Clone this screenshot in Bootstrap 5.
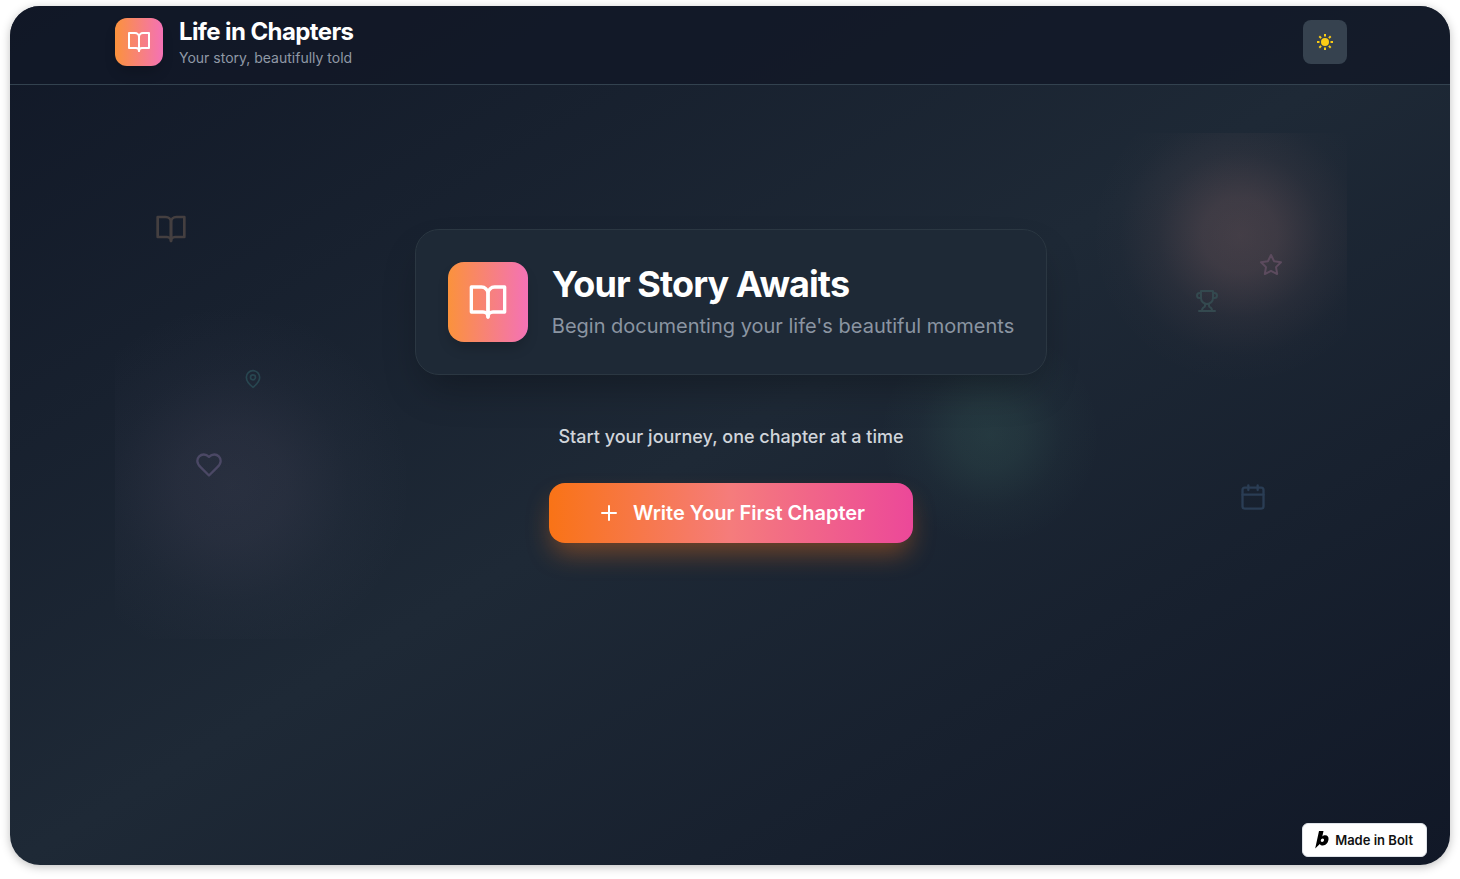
<!DOCTYPE html>
<html lang="en" data-bs-theme="dark">
<head>
<meta charset="utf-8">
<meta name="viewport" content="width=device-width, initial-scale=1">
<title>Life in Chapters</title>
<link href="https://cdn.jsdelivr.net/npm/bootstrap@5.3.0/dist/css/bootstrap.min.css" rel="stylesheet">
<style>
  body { font-family: Inter, "Liberation Sans", sans-serif; background: #fff; color: #fff; }
  .app-window {
    margin: 6px 10px 14px; min-height: calc(100vh - 20px); border-radius: 30px;
    background: linear-gradient(to bottom right, #111827, #1e2936 50%, #111827);
    box-shadow: 0 2px 10px rgba(0, 0, 0, .25);
  }
  .app-header { background: rgba(17, 24, 39, .8); border-bottom: 1px solid #33424f; padding: 10px 0 16px; }
  .page-width { width: 100%; max-width: 1280px; margin: 0 auto; padding: 0 23px 0 25px; }
  .icon { display: block; fill: none; stroke: currentColor; stroke-width: 2; stroke-linecap: round; stroke-linejoin: round; flex: none; }
  .logo-tile { background: linear-gradient(to right, #fb923c, #f472b6); box-shadow: 0 8px 14px -3px rgba(0, 0, 0, .2); color: #fff; flex: none; }
  .logo-sm { width: 48px; height: 48px; border-radius: 12px; }
  .logo-lg { width: 80px; height: 80px; border-radius: 16px; }
  .brand-name { font-size: 24px; line-height: 32px; font-weight: 700; letter-spacing: -.025em; }
  .brand-tag { font-size: 14px; line-height: 20px; color: #9099a6; }
  .theme-toggle { width: 44px; height: 44px; border-radius: 8px; background: #36424f; color: #facc15; }
  .theme-toggle:hover { background: #4b5563; color: #facc15; }
  .hero { margin-top: 48px; padding: 96px 0; }
  .glow { position: absolute; border-radius: 50%; }
  .glow-warm { width: 300px; height: 300px; right: -43px; top: -48px; background: radial-gradient(closest-side, rgba(235, 160, 150, .19), rgba(235, 160, 150, .16) 25%, rgba(235, 160, 150, .06) 55%, rgba(235, 160, 150, .01) 80%, transparent); }
  .glow-violet { width: 360px; height: 360px; left: -63px; bottom: -26px; background: radial-gradient(closest-side, rgba(160, 140, 175, .11), rgba(160, 140, 175, .09) 30%, rgba(150, 140, 175, .03) 65%, transparent); }
  .glow-teal { width: 220px; height: 220px; left: 765px; top: 192px; background: radial-gradient(closest-side, rgba(100, 185, 150, .13), rgba(100, 185, 150, .1) 30%, rgba(100, 185, 150, .03) 65%, transparent); }
  .float-icon { position: absolute; }
  .at-book { left: 40px; top: 80px; color: #443f40; }
  .at-pin { left: 128px; top: 236px; color: #284650; }
  .at-heart { left: 80px; bottom: 160px; color: #4b4865; }
  .at-star { right: 64px; top: 120px; color: #5c4b5e; }
  .at-trophy { right: 128px; top: 156px; color: #34494f; }
  .at-calendar { right: 80px; bottom: 128px; color: #2a3d54; }
  .story-card { padding: 32px; gap: 24px; border: 1px solid #2b3742; border-radius: 24px; background: #1e2936; box-shadow: 0 20px 40px -10px rgba(0, 0, 0, .3); }
  .story-title { font-size: 36px; line-height: 40px; font-weight: 700; letter-spacing: -.025em; margin-bottom: 8px; }
  .story-sub { font-size: 20px; line-height: 28px; color: #8b95a2; }
  .prompt { font-size: 18px; line-height: 28px; font-weight: 500; color: #d1d5db; margin: 48px 0 32px; }
  .write-btn, .write-btn:hover {
    height: 60px; padding: 0 48px; gap: 12px; border: 0; border-radius: 16px; color: #fff;
    font-size: 20px; line-height: 28px; font-weight: 600;
    background: linear-gradient(to right, #f97316, #f57c7c 50%, #ec4899);
    box-shadow: 0 14px 26px -4px rgba(249, 115, 22, .4);
  }
  .bolt-badge { position: absolute; right: 23px; bottom: 8px; height: 34px; padding: 0 13px 0 12px; gap: 6px; border: 1px solid #dfe3e8; border-radius: 6px; background: #fff; color: #111; font-size: 13px; line-height: 20px; font-weight: 600; }
</style>
</head>
<body>
<svg class="d-none" aria-hidden="true">
  <symbol id="book" viewBox="0 0 24 24"><path d="M2 3h6a4 4 0 0 1 4 4v14a3 3 0 0 0-3-3H2z"/><path d="M22 3h-6a4 4 0 0 0-4 4v14a3 3 0 0 1 3-3h7z"/></symbol>
</svg>
<div class="app-window position-relative overflow-hidden">
  <header class="app-header">
    <div class="page-width d-flex align-items-center justify-content-between">
      <div class="d-flex align-items-center gap-3">
        <div class="logo-tile logo-sm d-flex align-items-center justify-content-center"><svg class="icon" width="24" height="24"><use href="#book"/></svg></div>
        <div>
          <h1 class="brand-name m-0">Life in Chapters</h1>
          <p class="brand-tag m-0">Your story, beautifully told</p>
        </div>
      </div>
      <button type="button" class="theme-toggle btn border-0 p-0 d-flex align-items-center justify-content-center" aria-label="Switch to light theme">
        <svg class="icon" width="20" height="20" viewBox="0 0 20 20"><circle cx="10" cy="10" r="4" fill="currentColor" stroke="none"/><path stroke-linecap="butt" d="M10 2v2.500M10 15.500V18M2 10h2.500M15.500 10H18M4.300 4.300l1.800 1.800M13.900 13.900l1.800 1.800M4.300 15.700l1.800-1.800M13.900 6.100l1.800-1.800"/></svg>
      </button>
    </div>
  </header>
  <main class="page-width">
    <section class="hero position-relative overflow-hidden">
      <div class="glow glow-warm"></div>
      <div class="glow glow-violet"></div>
      <div class="glow glow-teal"></div>
      <svg class="icon float-icon at-book" width="32" height="32"><use href="#book"/></svg>
      <svg class="icon float-icon at-pin" width="20" height="20" viewBox="0 0 24 24"><path d="M20 10c0 6-8 12-8 12s-8-6-8-12a8 8 0 0 1 16 0Z"/><circle cx="12" cy="10" r="3"/></svg>
      <svg class="icon float-icon at-heart" width="28" height="28" viewBox="0 0 24 24"><path d="M19 14c1.49-1.46 3-3.21 3-5.5A5.5 5.5 0 0 0 16.500 3c-1.760 0-3 .5-4.500 2-1.500-1.500-2.740-2-4.500-2A5.500 5.500 0 0 0 2 8.500c0 2.300 1.500 4.050 3 5.500l7 7Z"/></svg>
      <svg class="icon float-icon at-star" width="24" height="24" viewBox="0 0 24 24"><path d="M12 2l3.090 6.260L22 9.270l-5 4.870 1.180 6.880L12 17.770l-6.180 3.250L7 14.140 2 9.270l6.910-1.010z"/></svg>
      <svg class="icon float-icon at-trophy" width="24" height="24" viewBox="0 0 24 24"><path d="M6 9H4.500a2.500 2.500 0 0 1 0-5H6M18 9h1.500a2.500 2.500 0 0 0 0-5H18M4 22h16M10 14.660V17c0 .55-.47.98-.97 1.210C7.850 18.750 7 20.240 7 22M14 14.660V17c0 .55.47.98.97 1.210C16.150 18.750 17 20.240 17 22M18 2H6v7a6 6 0 0 0 12 0V2Z"/></svg>
      <svg class="icon float-icon at-calendar" width="28" height="28" viewBox="0 0 24 24"><rect x="3" y="4" width="18" height="18" rx="2"/><path d="M16 2v4M8 2v4M3 10h18"/></svg>
      <div class="position-relative d-flex flex-column align-items-center">
        <div class="story-card d-flex align-items-center">
          <div class="logo-tile logo-lg d-flex align-items-center justify-content-center"><svg class="icon" width="40" height="40"><use href="#book"/></svg></div>
          <div>
            <h2 class="story-title">Your Story Awaits</h2>
            <p class="story-sub m-0">Begin documenting your life's beautiful moments</p>
          </div>
        </div>
        <p class="prompt">Start your journey, one chapter at a time</p>
        <button type="button" class="write-btn btn d-flex align-items-center">
          <svg class="icon" width="24" height="24" viewBox="0 0 24 24"><path d="M5 12h14M12 5v14"/></svg>
          Write Your First Chapter
        </button>
      </div>
    </section>
  </main>
  <a href="#" class="bolt-badge d-flex align-items-center text-decoration-none">
    <svg width="14" height="18" viewBox="0 0 14 18" aria-hidden="true"><path fill="#000" fill-rule="evenodd" d="M4 0h4.500L7.300 5.500C8 4.700 9 4.200 10.200 4.200c2.400 0 3.700 1.700 3.300 4.400-.5 3.500-2.800 5.900-5.600 5.900-1.400 0-2.500-.5-3.100-1.500L.2 17.500zM7.700 7.500c-.9 0-1.700.8-1.900 1.800-.2 1 .4 1.700 1.300 1.700.9 0 1.700-.7 1.900-1.700.2-1-.4-1.800-1.300-1.800z"/></svg>
    Made in Bolt
  </a>
</div>
<script src="https://cdn.jsdelivr.net/npm/bootstrap@5.3.0/dist/js/bootstrap.bundle.min.js"></script>
</body>
</html>
